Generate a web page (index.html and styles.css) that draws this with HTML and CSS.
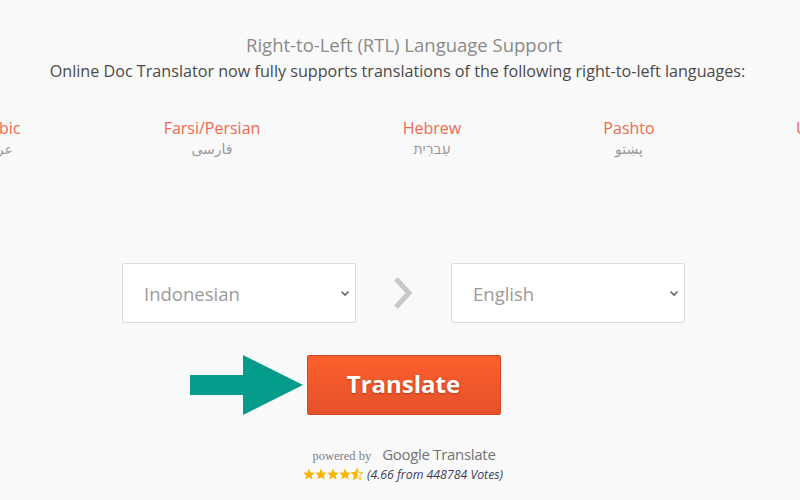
FILE: index.html
```html
<!DOCTYPE html>
<html>
<head>
<meta charset="utf-8">
<link rel="stylesheet" href="styles.css">
</head>
<body>
<div class="page">
  <div class="title">Right-to-Left (RTL) Language Support</div>
  <div class="subtitle">Online Doc Translator now fully supports translations of the following right-to-left languages:</div>
  <div class="langs">
    <div class="lang"><div class="name">Arabic</div><div class="native">عربي</div></div>
    <div class="lang"><div class="name">Farsi/Persian</div><div class="native">فارسی</div></div>
    <div class="lang"><div class="name">Hebrew</div><div class="native">עִברִית</div></div>
    <div class="lang"><div class="name">Pashto</div><div class="native">پښتو</div></div>
    <div class="lang"><div class="name">Urdu</div><div class="native">اردو</div></div>
  </div>
  <div class="selects">
    <div class="select"><span>Indonesian</span>
      <svg class="caret" width="10" height="7" viewBox="0 0 10 7"><path d="M1.5 1.5 L5 5 L8.5 1.5" fill="none" stroke="#666" stroke-width="1.6"/></svg>
    </div>
    <svg class="chev" width="22" height="34" viewBox="0 0 22 34"><path d="M4 3 L17 17 L4 31" fill="none" stroke="#c8c8c8" stroke-width="5"/></svg>
    <div class="select"><span>English</span>
      <svg class="caret" width="10" height="7" viewBox="0 0 10 7"><path d="M1.5 1.5 L5 5 L8.5 1.5" fill="none" stroke="#666" stroke-width="1.6"/></svg>
    </div>
  </div>
  <div class="action">
    <svg class="arrow" width="114" height="62" viewBox="0 0 114 62"><path d="M0 20 H53 V0 L113 30 L53 60 V40 H0 Z" fill="#069c8c"/></svg>
    <div class="btn">Translate</div>
  </div>
  <div class="powered"><span class="pb">powered by</span><span class="gt"><span class="g">Google</span> Translate</span></div>
  <div class="rating">
    <span class="stars">
      <svg width="60" height="13" viewBox="0 0 60 13">
        <defs>
          <path id="s" d="M6 0.5 L7.6 4.4 L11.7 4.7 L8.6 7.4 L9.6 11.5 L6 9.3 L2.4 11.5 L3.4 7.4 L0.3 4.7 L4.4 4.4 Z"/>
          <clipPath id="half"><rect x="0" y="0" width="6.5" height="13"/></clipPath>
        </defs>
        <use href="#s" x="0" fill="#f7b500"/>
        <use href="#s" x="12" fill="#f7b500"/>
        <use href="#s" x="24" fill="#f7b500"/>
        <use href="#s" x="36" fill="#f7b500"/>
        <g transform="translate(48 0)">
          <use href="#s" fill="none" stroke="#f7b500" stroke-width="0.9"/>
          <use href="#s" fill="#f7b500" clip-path="url(#half)"/>
        </g>
      </svg>
    </span>
    <span class="votes">(4.66 from 448784 Votes)</span>
  </div>
</div>
</body>
</html>
```
FILE: styles.css
```css
html, body {
  margin: 0;
  padding: 0;
  background: #f9f9f9;
}
.page {
  width: 800px;
  height: 500px;
  overflow: hidden;
  font-family: "Open Sans", sans-serif;
  display: flex;
  flex-direction: column;
  align-items: center;
}
.title {
  margin-top: 32px;
  font-size: 18.5px;
  color: #8a8a8a;
  line-height: 26px;
  padding-left: 8px;
}
.subtitle {
  margin-top: 1px;
  font-size: 16.15px;
  color: #4a4a4a;
  line-height: 24px;
  padding-right: 5px;
}
.langs {
  align-self: flex-start;
  margin-left: -110px;
  margin-top: 34px;
  display: grid;
  grid-template-columns: 214px 216px 224px 170px 202px;
}
.lang {
  text-align: center;
}
.name {
  font-size: 16px;
  color: #ef6a50;
  line-height: 22px;
}
.native {
  font-size: 14px;
  color: #999;
  line-height: 20px;
  font-family: "DejaVu Sans", "Noto Sans", sans-serif;
}
.selects {
  margin-top: 104px;
  margin-left: 7px;
  display: flex;
  align-items: center;
}
.select {
  box-sizing: border-box;
  width: 234px;
  height: 60px;
  background: #fff;
  border: 1px solid #dcdcdc;
  border-radius: 2px;
  display: flex;
  align-items: center;
  justify-content: space-between;
  padding: 0 5px 0 21px;
  font-size: 18.5px;
  color: #9a9a9a;
}
.chev {
  margin: 0 37px 0 36px;
}
.action {
  margin-top: 29px;
  display: flex;
  align-items: center;
  margin-left: -110px;
}
.arrow {
  margin-right: 3px;
  margin-top: 3px;
}
.btn {
  box-sizing: border-box;
  width: 194px;
  height: 60px;
  background: linear-gradient(#fb5f2c, #e5512a);
  border: 1px solid #d4471f;
  border-radius: 2px;
  color: #fff;
  font-weight: 700;
  font-size: 24px;
  display: flex;
  align-items: center;
  justify-content: center;
  text-shadow: 0 1px 2px rgba(120, 40, 0, 0.5);
  padding-bottom: 3px;
}
.powered {
  margin-top: 27px;
  display: flex;
  align-items: baseline;
  gap: 11px;
  margin-left: 8px;
}
.pb {
  font-family: "Liberation Serif", serif;
  font-size: 12.5px;
  color: #808080;
}
.gt {
  font-family: "Open Sans", sans-serif;
  font-size: 15px;
  color: #737373;
  letter-spacing: -0.3px;
}
.rating {
  margin-top: 2px;
  display: flex;
  align-items: center;
  gap: 4px;
  margin-left: 6px;
}
.stars svg {
  display: block;
}
.votes {
  font-style: italic;
  font-size: 12.3px;
  color: #3a3f5c;
}
```
